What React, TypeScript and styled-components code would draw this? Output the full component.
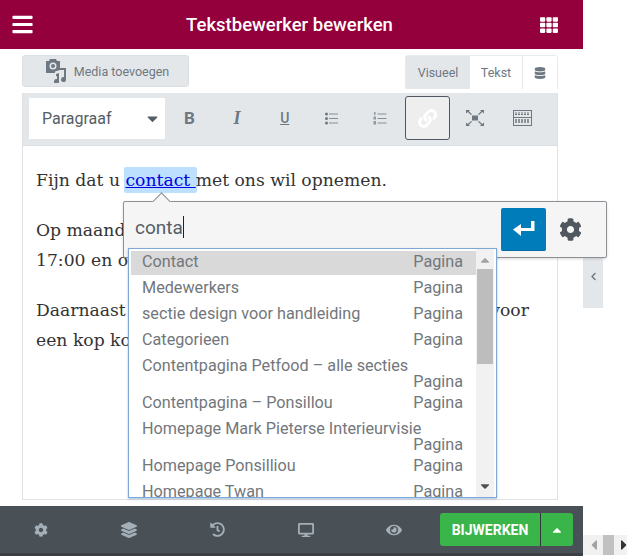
import React from 'react'
import styled, { createGlobalStyle } from 'styled-components'
import {
  FaBars,
  FaTh,
  FaDatabase,
  FaLink,
  FaCog,
  FaLayerGroup,
  FaHistory,
  FaDesktop,
  FaEye,
  FaCaretUp,
  FaCaretDown,
  FaCaretLeft,
  FaCaretRight,
  FaChevronLeft,
} from 'react-icons/fa'

const RESULTS = [
  { title: 'Contact', active: true },
  { title: 'Medewerkers' },
  { title: 'sectie design voor handleiding' },
  { title: 'Categorieen' },
  { title: 'Contentpagina Petfood – alle secties', wrapped: true },
  { title: 'Contentpagina – Ponsillou' },
  { title: 'Homepage Mark Pieterse Interieurvisie', wrapped: true },
  { title: 'Homepage Ponsilliou' },
  { title: 'Homepage Twan' },
]

const MediaIcon = () => (
  <svg width="22" height="24" viewBox="0 0 22 24" fill="#6d7882">
    <path fillRule="evenodd" d="M5 0h6l1 2h3v9l-5 1.500V14H1V2h3zM8 3.500a3.500 3.500 0 1 0 0 7 3.500 3.500 0 0 0 0-7z" />
    <circle cx="8" cy="7" r="2" />
    <path d="M15 9h6v11.500a2.500 2.500 0 1 1-2-2.400V11h-4z" />
    <path d="M11 15l3-1v8.500a2.500 2.500 0 1 1-2-2.400V17l-1 .3z" />
  </svg>
)

const BulletIcon = () => (
  <svg width="14" height="13" viewBox="0 0 14 13" fill="#6d7882">
    <rect x="0" y="0.500" width="3" height="3" rx="1.500" />
    <rect x="0" y="5" width="3" height="3" rx="1.500" />
    <rect x="0" y="9.500" width="3" height="3" rx="1.500" />
    <rect x="4" y="1.500" width="9" height="1" opacity="0.8" />
    <rect x="4" y="6" width="9" height="1" opacity="0.8" />
    <rect x="4" y="10.500" width="9" height="1" opacity="0.8" />
  </svg>
)

const NumberIcon = () => (
  <svg width="14" height="13" viewBox="0 0 14 13" fill="#6d7882">
    <rect x="1" y="0" width="1.500" height="3" opacity="0.7" />
    <rect x="0.500" y="4.500" width="2.500" height="3" opacity="0.7" />
    <rect x="0.500" y="9" width="2.500" height="3.500" opacity="0.7" />
    <rect x="4.500" y="1.500" width="9" height="1" opacity="0.8" />
    <rect x="4.500" y="6" width="9" height="1" opacity="0.8" />
    <rect x="4.500" y="10.500" width="9" height="1" opacity="0.8" />
  </svg>
)

const FullscreenIcon = () => (
  <svg width="18" height="16" viewBox="0 0 18 16" fill="#6d7882">
    <rect x="6" y="5.500" width="6" height="5" />
    <path d="M0 0h4l-1.200 1.200L6 4.200 5 5 1.800 2 0 3.500zM18 0h-4l1.200 1.200L12 4.200l1 .8 3.200-3L18 3.500zM0 16h4l-1.200-1.200L6 11.800 5 11l-3.200 3L0 12.500zM18 16h-4l1.200-1.200L12 11.800l1-.8 3.200 3 1.800-1.500z" />
  </svg>
)

const KeyboardIcon = () => (
  <svg width="19" height="16" viewBox="0 0 19 16">
    <rect x="0.500" y="0.500" width="18" height="15" fill="none" stroke="#6d7882" />
    <path d="M2 3h15M2 4.500h15" stroke="#6d7882" strokeDasharray="2 1" />
    <rect x="0.500" y="7" width="18" height="1" fill="#6d7882" />
    <path d="M2 10h15M2 12h15" stroke="#6d7882" strokeDasharray="2 1" strokeWidth="1.500" />
  </svg>
)

const EnterIcon = () => (
  <svg width="22" height="16" viewBox="0 0 22 16" fill="#fff">
    <path d="M18 0h3.500v10H8v5L0 8.500 8 3v4h10z" />
  </svg>
)

const App = () => (
  <>
    <GlobalStyle />
    <Shell>
      <Panel>
        <Header>
          <FaBars size={23} />
          <HeaderTitle>Tekstbewerker bewerken</HeaderTitle>
          <FaTh size={18} />
        </Header>

        <Content>
          <MediaRow>
            <MediaButton>
              <MediaIcon />
              Media toevoegen
            </MediaButton>
            <Tabs>
              <Tab $active>Visueel</Tab>
              <Tab>Tekst</Tab>
              <Tab $narrow>
                <FaDatabase size={12} />
              </Tab>
            </Tabs>
          </MediaRow>

          <Editor>
            <Toolbar>
              <FormatSelect>
                Paragraaf
                <FaCaretDown size={17} color="#555d66" />
              </FormatSelect>
              <ToolGroup>
                <ToolButton>
                  <BoldGlyph>B</BoldGlyph>
                </ToolButton>
                <ToolButton>
                  <ItalicGlyph>I</ItalicGlyph>
                </ToolButton>
                <ToolButton>
                  <UnderGlyph>U</UnderGlyph>
                </ToolButton>
                <ToolButton>
                  <BulletIcon />
                </ToolButton>
                <ToolButton>
                  <NumberIcon />
                </ToolButton>
                <ToolButton $pressed>
                  <FaLink size={19} color="#fff" />
                </ToolButton>
                <ToolButton>
                  <FullscreenIcon />
                </ToolButton>
                <ToolButton>
                  <KeyboardIcon />
                </ToolButton>
              </ToolGroup>
            </Toolbar>

            <EditorBody>
              <Paragraph>
                Fijn dat u{' '}
                <Selection>
                  <a href="#contact">contact </a>
                </Selection>
                met ons wil opnemen.
              </Paragraph>
              <Paragraph>
                Op maandag t/m vrijdag zijn wij bereikbaar van 9:00 tot
                <br />
                17:00 en op zaterdag van 10:00 tot 14:00.
              </Paragraph>
              <Paragraph>
                Daarnaast bent u ook van harte welkom op kantoor voor
                <br />
                een kop koffie of thee.
              </Paragraph>
            </EditorBody>
          </Editor>
        </Content>

        <Footer>
          <FooterIcon>
            <FaCog size={14} />
          </FooterIcon>
          <FooterIcon>
            <FaLayerGroup size={16} />
          </FooterIcon>
          <FooterIcon>
            <FaHistory size={15} />
          </FooterIcon>
          <FooterIcon>
            <FaDesktop size={16} />
          </FooterIcon>
          <FooterIcon>
            <FaEye size={16} />
          </FooterIcon>
          <SaveGroup>
            <SaveButton>Bijwerken</SaveButton>
            <SaveMenu>
              <FaCaretUp size={14} />
            </SaveMenu>
          </SaveGroup>
        </Footer>
        <BottomEdge />
      </Panel>

      <Side>
        <CollapseTab>
          <FaChevronLeft size={9} />
        </CollapseTab>
        <PageScroll>
          <FaCaretLeft size={16} />
          <PageThumb />
          <FaCaretRight size={16} color="#333" />
        </PageScroll>
      </Side>

      <LinkPopover>
        <LinkInput>
          conta
          <Caret />
        </LinkInput>
        <ApplyButton>
          <EnterIcon />
        </ApplyButton>
        <SettingsButton>
          <FaCog size={23} />
        </SettingsButton>

        <Dropdown>
          <ResultList>
            {RESULTS.map(result => (
              <ResultRow key={result.title} $active={result.active} $wrapped={result.wrapped}>
                <span>{result.title}</span>
                <ResultType>Pagina</ResultType>
              </ResultRow>
            ))}
          </ResultList>
          <ScrollBar>
            <ScrollArrow>
              <FaCaretUp size={14} color="#a3a3a3" />
            </ScrollArrow>
            <ScrollThumb />
            <ScrollArrow $bottom>
              <FaCaretDown size={14} color="#505050" />
            </ScrollArrow>
          </ScrollBar>
        </Dropdown>
      </LinkPopover>
    </Shell>
  </>
)

export default App

const GlobalStyle = createGlobalStyle`
  html,
  body {
    margin: 0;
    padding: 0;
    overflow: hidden;
    background: #fff;
  }

  * {
    box-sizing: border-box;
  }
`

const Shell = styled.div`
  position: relative;
  display: flex;
  width: 627px;
  height: 556px;
  font-family: Roboto, 'Liberation Sans', sans-serif;
  overflow: hidden;
`

const Panel = styled.div`
  display: flex;
  flex: none;
  flex-direction: column;
  width: 583px;
  height: 100%;
`

const Header = styled.div`
  display: flex;
  flex: none;
  align-items: center;
  justify-content: space-between;
  height: 49px;
  padding: 0 25px 0 11px;
  background: #93003c;
  color: #fff;
`

const HeaderTitle = styled.div`
  font-size: 18.500px;
  font-weight: 500;
  margin-left: 5px;
`

const Content = styled.div`
  display: flex;
  flex: 1;
  flex-direction: column;
  min-height: 0;
  padding: 6px 25px 6px 22px;
`

const MediaRow = styled.div`
  display: flex;
  flex: none;
  justify-content: space-between;
  height: 38px;
`

const MediaButton = styled.div`
  display: flex;
  align-items: center;
  justify-content: center;
  gap: 7px;
  width: 167px;
  height: 32px;
  padding-left: 3px;
  background: #e4e7ea;
  border: 1px solid #dcdfe2;
  border-radius: 3px;
  color: #6d7882;
  font-size: 12.500px;
`

const Tabs = styled.div`
  display: flex;
  height: 34px;
  border: 1px solid #e8eaec;
  border-bottom: 0;
  border-radius: 3px 3px 0 0;
`

const Tab = styled.div<{ $active?: boolean; $narrow?: boolean }>`
  display: flex;
  align-items: center;
  justify-content: center;
  width: ${p => (p.$narrow ? '35px' : p.$active ? '64px' : '52px')};
  background: ${p => (p.$active ? '#e4e7ea' : '#fff')};
  border-left: ${p => (p.$narrow ? '1px solid #e4e7ea' : '0')};
  color: #6d7882;
  font-size: 12.500px;
`

const Editor = styled.div`
  display: flex;
  flex: 1;
  flex-direction: column;
  min-height: 0;
  border: 1px solid #e0e2e5;
  border-top: 0;
`

const Toolbar = styled.div`
  display: flex;
  flex: none;
  align-items: center;
  height: 53px;
  padding: 0 0 2px 6px;
  background: #e4e7ea;
  border-bottom: 1px solid #dcdfe2;
`

const FormatSelect = styled.div`
  display: flex;
  flex: none;
  align-items: center;
  justify-content: space-between;
  width: 136px;
  height: 41px;
  padding: 0 4px 0 13px;
  background: #fff;
  color: #555d66;
  font-size: 16px;
`

const ToolGroup = styled.div`
  display: flex;
  align-items: center;
  margin-left: 0.500px;
`

const ToolButton = styled.div<{ $pressed?: boolean }>`
  display: flex;
  flex: none;
  align-items: center;
  justify-content: center;
  width: 47.700px;
  height: 44px;
  color: #6d7882;
  ${p =>
    p.$pressed &&
    `
    width: 45px;
    margin: 0 1px;
    background: #eee;
    border: 1px solid #50575e;
    border-radius: 3px;
  `}
`

const BoldGlyph = styled.span`
  font-size: 17px;
  font-weight: 700;
`

const ItalicGlyph = styled.span`
  font-family: 'Liberation Serif', serif;
  font-size: 18px;
  font-style: italic;
  font-weight: 700;
`

const UnderGlyph = styled.span`
  font-size: 14px;
  font-weight: 500;
  text-decoration: underline;
`

const EditorBody = styled.div`
  flex: 1;
  padding: 19px 13px;
  background: #fff;
  font-family: 'DejaVu Serif', Georgia, serif;
  font-size: 17.200px;
  line-height: 30px;
  color: #333;
  white-space: nowrap;
  overflow: hidden;
`

const Paragraph = styled.p`
  margin: 0 0 20px;
`

const Selection = styled.span`
  padding: 3px 1px;
  margin: 0 -1px;
  background: #bde0fe;
  border-radius: 2px;

  a {
    color: #0000e0;
  }
`

const Footer = styled.div`
  display: flex;
  flex: none;
  align-items: center;
  height: 47px;
  padding: 0 10px 0 0;
  background: #495157;
  color: #a4afb7;
`

const FooterIcon = styled.div`
  display: flex;
  align-items: center;
  justify-content: center;
  width: 88.200px;

  &:first-child {
    margin-left: -3px;
  }
`

const SaveGroup = styled.div`
  display: flex;
  height: 33px;
  margin-left: auto;
  border-radius: 3px;
  background: #39b54a;
  color: #fff;
`

const SaveButton = styled.div`
  display: flex;
  align-items: center;
  justify-content: center;
  width: 101px;
  border-right: 1px solid #33383c;
  font-size: 14px;
  font-weight: 700;
  text-transform: uppercase;
`

const SaveMenu = styled.div`
  display: flex;
  align-items: center;
  justify-content: center;
  width: 32px;
`

const BottomEdge = styled.div`
  flex: none;
  height: 3px;
  background: #3c3f44;
`

const Side = styled.div`
  display: flex;
  flex: 1;
  flex-direction: column;
  align-items: flex-start;
  justify-content: space-between;
  min-width: 0;
  overflow: hidden;
`

const CollapseTab = styled.div`
  display: flex;
  align-items: flex-start;
  justify-content: center;
  width: 20px;
  height: 50px;
  margin-top: 258px;
  padding-top: 14px;
  background: #e4e7ea;
  color: #6d7882;
`

const PageScroll = styled.div`
  display: flex;
  flex: none;
  align-items: center;
  gap: 1px;
  width: 100%;
  height: 20px;
  margin-bottom: 1px;
  padding-left: 3px;
  background: #f1f1f1;
  color: #a3a3a3;

  svg {
    flex: none;
  }

  svg:last-child {
    margin-left: 1px;
  }
`

const PageThumb = styled.div`
  flex: none;
  width: 11px;
  height: 20px;
  background: #c1c1c1;
`

const LinkPopover = styled.div`
  position: absolute;
  top: 201px;
  left: 123px;
  display: flex;
  align-items: flex-start;
  width: 484px;
  height: 57px;
  padding: 6px 0 0 11px;
  background: #f5f5f5;
  border: 1px solid #8c8f94;
  border-radius: 2px;
  box-shadow: 0 1px 3px rgba(0, 0, 0, 0.15);

  &::before {
    content: '';
    position: absolute;
    top: -7px;
    left: 31px;
    width: 12px;
    height: 12px;
    background: #f5f5f5;
    border-top: 1px solid #8c8f94;
    border-left: 1px solid #8c8f94;
    transform: rotate(45deg);
  }
`

const LinkInput = styled.div`
  display: flex;
  align-items: center;
  width: 366px;
  height: 38px;
  color: #555d66;
  font-size: 19px;
`

const Caret = styled.span`
  width: 1px;
  height: 22px;
  background: #222;
`

const ApplyButton = styled.div`
  display: flex;
  align-items: center;
  justify-content: center;
  width: 45px;
  height: 43px;
  background: #007cba;
  border-bottom: 1px solid #006a9e;
  border-radius: 2px;
`

const SettingsButton = styled.div`
  display: flex;
  align-items: center;
  justify-content: center;
  width: 48px;
  height: 43px;
  color: #50575e;
`

const Dropdown = styled.div`
  position: absolute;
  top: 46px;
  left: 4px;
  display: flex;
  width: 369px;
  height: 250px;
  padding: 0 2px;
  background: #fff;
  border: 1px solid #7ea9d4;
  box-shadow: 0 1px 2px rgba(80, 130, 190, 0.5);
`

const ResultList = styled.div`
  flex: 1;
  min-width: 0;
  overflow: hidden;
`

const ResultRow = styled.div<{ $active?: boolean; $wrapped?: boolean }>`
  display: flex;
  flex-wrap: wrap;
  justify-content: space-between;
  column-gap: 10px;
  padding: ${p => (p.$wrapped ? '5px 13px 0 11px' : p.$active ? '3px 13px 5px 11px' : '5px 13px 5px 11px')};
  margin-top: ${p => (p.$active ? '2px' : '0')};
  background: ${p => (p.$active ? '#d9d9d9' : 'transparent')};
  color: #72777c;
  font-size: 16.200px;
  line-height: 16px;
  white-space: nowrap;
`

const ResultType = styled.span`
  margin-left: auto;
`

const ScrollBar = styled.div`
  display: flex;
  flex: none;
  flex-direction: column;
  width: 18px;
  height: 100%;
  padding: 2px 0;
  background: #f1f1f1;
`

const ScrollArrow = styled.div<{ $bottom?: boolean }>`
  display: flex;
  flex: none;
  align-items: center;
  justify-content: center;
  height: 18px;
  margin-top: ${p => (p.$bottom ? 'auto' : '0')};
`

const ScrollThumb = styled.div`
  height: 95px;
  margin: 0 1px;
  background: #bdbdbd;
`
